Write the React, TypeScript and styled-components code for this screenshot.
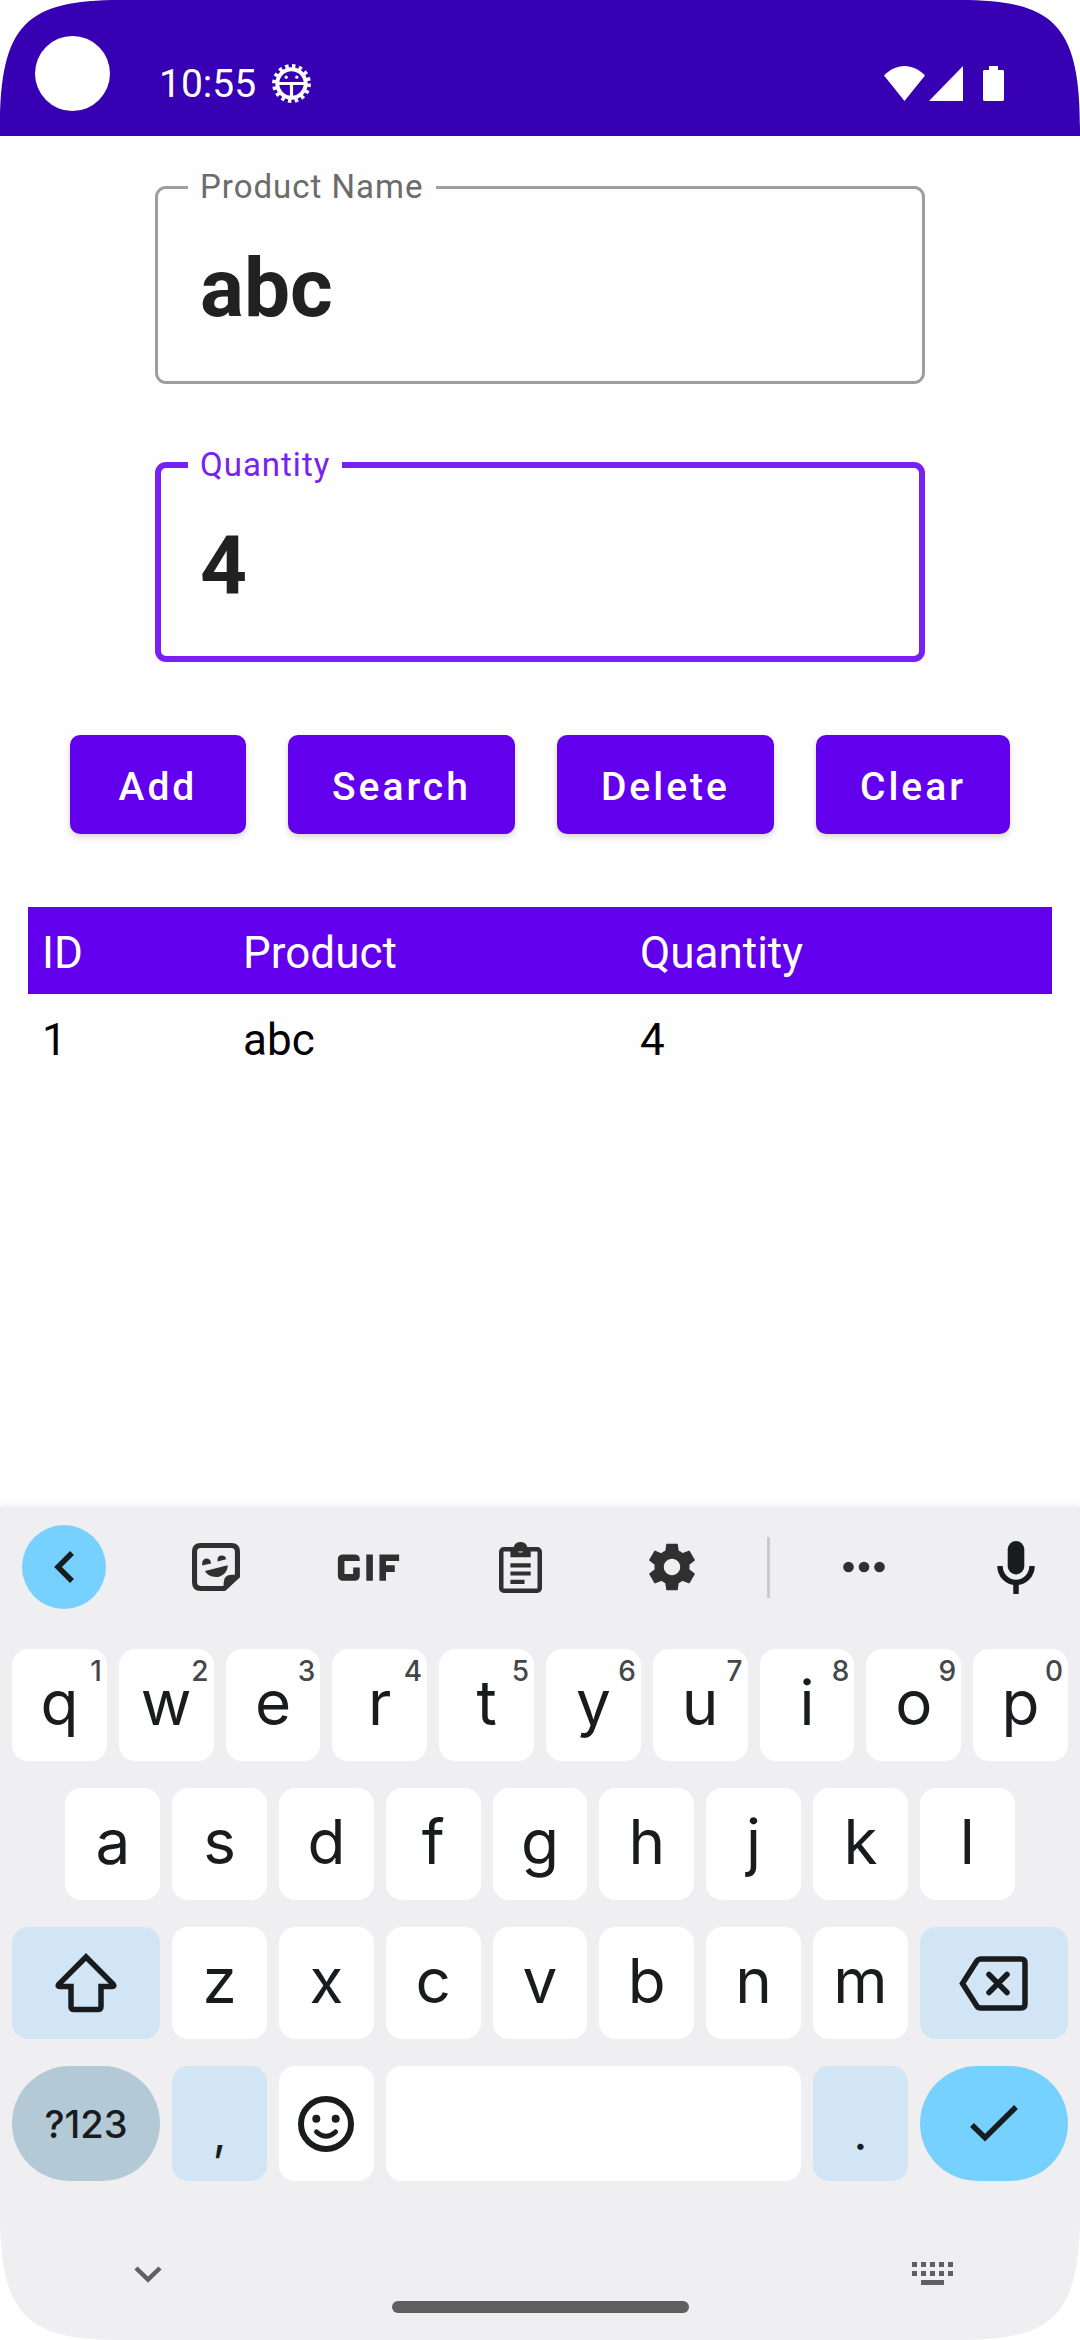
import React from "react";
import styled, { createGlobalStyle, css } from "styled-components";
import { MdGif } from "react-icons/md";

const GlobalStyle = createGlobalStyle`
  *, *::before, *::after { box-sizing: border-box; }
  body {
    margin: 0;
    background: #fefefe;
    font-family: Roboto, "Liberation Sans", sans-serif;
  }
  button, input { font-family: inherit; }
  button { border: 0; padding: 0; cursor: pointer; }
  svg { display: block; flex-shrink: 0; }
`;

const Screen = styled.div`
  position: relative;
  display: flex;
  flex-direction: column;
  min-height: 100vh;
  overflow: hidden;
`;

/* ---------- display cut-outs ---------- */

const Corner = styled.svg<{ $v: "top" | "bottom"; $h: "left" | "right" }>`
  position: absolute;
  ${(p) => p.$v}: 0;
  ${(p) => p.$h}: 0;
  z-index: 2;
  transform: scale(${(p) => (p.$h === "right" ? -1 : 1)}, ${(p) => (p.$v === "bottom" ? -1 : 1)});
`;

const Camera = styled.div`
  position: absolute;
  top: 36px;
  left: 35px;
  width: 75px;
  height: 75px;
  border-radius: 50%;
  background: #fff;
`;

/* ---------- status bar ---------- */

const StatusBar = styled.header`
  display: flex;
  align-items: center;
  justify-content: space-between;
  height: 136px;
  padding: 30px 76px 0 159px;
  background: #3700b3;
  color: #fff;
`;

const StatusGroup = styled.div<{ $gap: number }>`
  display: flex;
  align-items: center;
  gap: ${(p) => p.$gap}px;
`;

const Clock = styled.span`
  padding-top: 2px;
  font-size: 39px;
  line-height: 48px;
`;

/* ---------- form ---------- */

const Main = styled.main`
  display: flex;
  flex-direction: column;
  gap: 73px;
  padding: 33px 28px 72px;
`;

const Fields = styled.form`
  display: flex;
  flex-direction: column;
  gap: 63px;
  padding: 0 127px;
`;

const Outline = styled.fieldset<{ $focused?: boolean }>`
  --line: ${(p) => (p.$focused ? 6 : 3)}px;
  min-width: 0;
  margin: 0;
  padding: 0 calc(33px - var(--line)) calc(13px - var(--line));
  border: var(--line) solid ${(p) => (p.$focused ? "#7722f2" : "#9e9e9e")};
  border-radius: 11px;
  color: ${(p) => (p.$focused ? "#7722f2" : "#6b6b6b")};
`;

const Legend = styled.legend`
  padding: 0 12px;
  font-size: 33px;
  line-height: 36px;
  letter-spacing: 1px;
`;

const TextInput = styled.input`
  display: block;
  width: 100%;
  height: 166px;
  padding: 0 12px;
  border: 0;
  outline: 0;
  background: transparent;
  color: #212121;
  font-size: 82px;
  font-weight: 700;
`;

const Actions = styled.div`
  display: flex;
  justify-content: center;
  gap: 42px;
`;

const ActionButton = styled.button`
  min-width: 176px;
  height: 99px;
  padding: 4px 44px 0;
  border-radius: 10px;
  background: #6200ee;
  box-shadow: 0 3px 6px rgba(0, 0, 0, 0.16);
  color: #fff;
  font-size: 39px;
  font-weight: 500;
  letter-spacing: 3px;
`;

/* ---------- table ---------- */

const Table = styled.table`
  width: 100%;
  border-collapse: collapse;
  table-layout: fixed;
  color: #000;
  font-size: 44px;
  line-height: 52px;

  thead {
    background: #6200ee;
    color: #fff;
  }
`;

const cell = css`
  height: 87px;
  padding: 4px 14px 0;
  text-align: left;
  font-weight: 400;
  vertical-align: middle;
`;

const HeadCell = styled.th<{ $width?: number }>`
  ${cell}
  width: ${(p) => (p.$width ? `${p.$width}px` : "auto")};
`;

const Cell = styled.td`
  ${cell}
`;

/* ---------- keyboard ---------- */

const Keyboard = styled.section`
  margin-top: auto;
  padding-top: 18px;
  background: #efeff1;
  box-shadow: 0 -2px 6px rgba(0, 0, 0, 0.06);
  color: #191c1e;
  font-family: Inter, Roboto, sans-serif;
`;

const Toolbar = styled.div`
  display: flex;
  align-items: center;
  justify-content: space-between;
  padding: 0 22px;
`;

const ToolGroup = styled.div`
  display: flex;
  gap: 68px;
`;

const ToolButton = styled.button<{ $accent?: boolean }>`
  display: flex;
  align-items: center;
  justify-content: center;
  width: 84px;
  height: 84px;
  border-radius: 50%;
  background: ${(p) => (p.$accent ? "#77d1ff" : "transparent")};
  color: ${(p) => (p.$accent ? "#191c1e" : "#303030")};
`;

const ToolDivider = styled.div`
  width: 3px;
  height: 61px;
  background: #cacacc;
`;

const Keys = styled.div`
  display: grid;
  gap: 27px;
  padding: 40px 12px 69px;
`;

const KeyRow = styled.div<{ $inset?: boolean }>`
  display: grid;
  grid-template-columns: repeat(20, minmax(0, 1fr));
  column-gap: 12px;

  ${(p) => p.$inset && "& > :first-child { grid-column-start: 2; }"}
`;

type Tone = "plain" | "soft" | "muted" | "accent";

const toneColor: Record<Tone, string> = {
  plain: "#ffffff",
  soft: "#d2e5f4",
  muted: "#b4c9d6",
  accent: "#77d1ff",
};

const Key = styled.button<{ $span?: number; $tone?: Tone; $tall?: boolean }>`
  position: relative;
  display: flex;
  align-items: center;
  justify-content: center;
  grid-column-end: span ${(p) => p.$span ?? 2};
  height: ${(p) => (p.$tall ? 115 : 112)}px;
  border-radius: ${(p) => (p.$tone === "muted" || p.$tone === "accent" ? 58 : 16)}px;
  background: ${(p) => toneColor[p.$tone ?? "plain"]};
  color: inherit;
`;

const Letter = styled.span`
  padding-bottom: 4px;
  font-size: 62px;
  line-height: 72px;
`;

const Punctuation = styled.span`
  padding-top: 18px;
  font-size: 48px;
  line-height: 58px;
`;

const ModeLabel = styled.span`
  font-size: 38px;
  font-weight: 500;
  line-height: 46px;
`;

const Hint = styled.span`
  position: absolute;
  top: 8px;
  right: 5px;
  color: #444749;
  font-size: 28px;
  font-weight: 500;
  line-height: 28px;
`;

const NavRow = styled.div`
  display: flex;
  justify-content: space-between;
  padding: 0 123px 0 124px;
`;

const NavButton = styled.button`
  display: flex;
  align-items: center;
  justify-content: center;
  width: 48px;
  height: 48px;
  background: transparent;
  color: #606062;
`;

const HomeBar = styled.div`
  width: 297px;
  height: 12px;
  margin: 3px auto 27px;
  border-radius: 6px;
  background: #5f5f5f;
`;

/* ---------- icons ---------- */

const BugIcon = () => (
  <svg width="39" height="39" viewBox="-19.5 -19.5 39 39" fill="none" stroke="#fff">
    <circle r="14.2" strokeWidth="4" />
    <circle r="17.4" strokeWidth="4" strokeDasharray="3.4 3.433" />
    <path d="M-13 0H13M0 0V14" strokeWidth="3.2" />
    <circle cx="-5.3" cy="-6.3" r="1.6" fill="#fff" stroke="none" />
    <circle cx="5.3" cy="-6.3" r="1.6" fill="#fff" stroke="none" />
  </svg>
);

const WifiIcon = () => (
  <svg width="41" height="35" viewBox="0 0 41 35" fill="#fff">
    <path d="M20.5 35L0 9.500C6 3.500 13 0 20.500 0S35 3.500 41 9.500Z" />
  </svg>
);

const SignalIcon = () => (
  <svg width="34" height="35" viewBox="0 0 34 35" fill="#fff">
    <path d="M34 0V35H0Z" />
  </svg>
);

const BatteryIcon = () => (
  <svg width="21" height="35" viewBox="0 0 21 35" fill="#fff">
    <path d="M6 0H15V4H20L21 5V34L20 35H1L0 34V5L1 4H6Z" />
  </svg>
);

const BackIcon = () => (
  <svg width="22" height="34" viewBox="0 0 22 34" fill="none" stroke="currentColor" strokeWidth="5.500">
    <path d="M19 3L5 17L19 31" />
  </svg>
);

const StickerIcon = () => (
  <svg width="48" height="48" viewBox="0 0 47 47" fill="currentColor">
    <path
      d="M44.500 32.500V8.500Q44.500 2.500 38.500 2.500H8.500Q2.500 2.500 2.500 8.500V38.500Q2.500 44.500 8.500 44.500H31.500Z"
      fill="none"
      stroke="currentColor"
      strokeWidth="5"
    />
    <path d="M31 45V39Q31 31 39 31H46V33L33 46Z" />
    <path d="M10 22V19.500A4.300 4.300 0 0 1 18.600 19.500V20Z" />
    <path d="M25 18V15.500A4.300 4.300 0 0 1 33.400 15.500V16Z" />
    <path d="M12.700 27.500L35 21.700C35 29 29 33.300 23.500 33.300C19 33.300 15 31.500 12.700 27.500Z" />
  </svg>
);

const ClipboardIcon = () => (
  <svg width="43" height="51" viewBox="0 0 43 51" fill="currentColor">
    <rect x="2.250" y="7.300" width="38.500" height="41.400" rx="2.500" fill="none" stroke="currentColor" strokeWidth="4.500" />
    <path
      fillRule="evenodd"
      d="M11.400 5.500H14.500A7.200 7.200 0 0 1 28.500 5.500H31.700V15.300H11.400ZM21.500 5.200A2.700 2.700 0 1 0 21.500 10.600A2.700 2.700 0 1 0 21.500 5.200Z"
    />
    <path d="M11.400 21.300H31.700V25.500H11.400ZM11.400 29.400H31.700V33.600H11.400ZM11.400 37.800H25.500V42H11.400Z" />
  </svg>
);

const GearIcon = () => (
  <svg width="56" height="56" viewBox="0 0 24 24" fill="currentColor">
    <path d="M19.44 12.99l-.01.02c.04-.33.08-.67.08-1.010 0-.34-.03-.66-.07-.99l.01.02 2.440-1.920-2.430-4.220-2.870 1.160.01.01c-.52-.4-1.090-.74-1.710-1h.01L14.440 2H9.570l-.44 3.070h.01c-.62.26-1.190.6-1.710 1l.01-.01-2.880-1.170-2.440 4.220 2.440 1.920.01-.02c-.04.33-.07.65-.07.99 0 .34.03.68.08 1.010l-.01-.02-2.100 1.650-.33.26 2.430 4.200 2.880-1.150-.02-.04c.53.41 1.100.75 1.730 1.010h-.03L9.580 22h4.850s.03-.18.06-.42l.38-2.650h-.01c.62-.26 1.200-.6 1.730-1.010l-.02.04 2.880 1.150 2.430-4.200s-.14-.12-.33-.26l-2.110-1.660zM12 15.500c-1.930 0-3.500-1.570-3.500-3.500s1.570-3.500 3.500-3.500 3.500 1.570 3.500 3.500-1.570 3.500-3.500 3.500z" />
  </svg>
);

const MoreIcon = () => (
  <svg width="42" height="12" viewBox="0 0 42 12" fill="currentColor">
    <circle cx="5.500" cy="6" r="5.300" />
    <circle cx="21" cy="6" r="5.300" />
    <circle cx="36.500" cy="6" r="5.300" />
  </svg>
);

const MicIcon = () => (
  <svg width="38" height="53" viewBox="0 0 38 53" fill="none" stroke="#191c1e" strokeWidth="5.500">
    <rect x="10.700" y="0" width="16.600" height="33.500" rx="8.300" fill="#191c1e" stroke="none" />
    <path d="M3 25A16 16.500 0 0 0 35 25M19 42V53" />
  </svg>
);

const ShiftIcon = () => (
  <svg width="62" height="60" viewBox="0 0 62 60" fill="none" stroke="currentColor" strokeWidth="5.500">
    <path d="M31 4L4 31Q2 33.500 5 33.500H16V53.500Q16 56.500 19 56.500H43Q46 56.500 46 53.500V33.500H57Q60 33.500 58 31Z" />
  </svg>
);

const BackspaceIcon = () => (
  <svg width="69" height="55" viewBox="0 0 69 55" fill="none" stroke="currentColor" strokeWidth="5.500">
    <path d="M3.500 27.500L17.500 5.500Q19 3 22 3H62Q66 3 66 7V48Q66 52 62 52H22Q19 52 17.500 49.500Z" />
    <path d="M30 18.500L48 36.500M48 18.500L30 36.500" strokeLinecap="round" />
  </svg>
);

const SmileIcon = () => (
  <svg width="56" height="56" viewBox="-28 -28 56 56" fill="none" stroke="currentColor">
    <circle r="25" strokeWidth="6" />
    <path d="M-9.500 8Q0 16.500 9.500 8" strokeWidth="5" strokeLinecap="round" />
    <circle cx="-9.700" cy="-5.300" r="4" fill="currentColor" stroke="none" />
    <circle cx="9.700" cy="-5.300" r="4" fill="currentColor" stroke="none" />
  </svg>
);

const CheckIcon = () => (
  <svg width="48" height="37" viewBox="0 0 48 37" fill="none" stroke="currentColor" strokeWidth="5.500">
    <path d="M2 20L15 32.700L46 2" />
  </svg>
);

const CollapseIcon = () => (
  <svg width="28" height="17" viewBox="0 0 28 17" fill="none" stroke="currentColor" strokeWidth="4.500">
    <path d="M2 2L14 13.700L26 2" />
  </svg>
);

const KeyboardIcon = () => (
  <svg width="42" height="24" viewBox="0 0 42 24" fill="currentColor">
    {[0, 9, 18, 27, 36].map((x) => (
      <React.Fragment key={x}>
        <rect x={x} y="0" width="5" height="5" />
        <rect x={x} y="9" width="5" height="5" />
      </React.Fragment>
    ))}
    <rect x="9" y="18" width="23" height="5" />
  </svg>
);

const CornerMask = ({ v, h }: { v: "top" | "bottom"; h: "left" | "right" }) => (
  <Corner $v={v} $h={h} width="128" height="128" viewBox="0 0 128 128" fill="#fff" aria-hidden="true">
    <path d="M0 0H120C27 0 0 24 0 128Z" />
  </Corner>
);

/* ---------- data ---------- */

const fields = [
  { id: "product-name", label: "Product Name", value: "abc", focused: false },
  { id: "quantity", label: "Quantity", value: "4", focused: true },
];
const actions = ["Add", "Search", "Delete", "Clear"];
const products = [{ id: 1, product: "abc", quantity: 4 }];
const topRow = [..."qwertyuiop"];
const hints = [..."1234567890"];

const LetterKeys = ({ letters }: { letters: string }) => (
  <>
    {[...letters].map((letter) => (
      <Key type="button" key={letter}>
        <Letter>{letter}</Letter>
      </Key>
    ))}
  </>
);

export default function App() {
  return (
    <Screen>
      <GlobalStyle />
      <CornerMask v="top" h="left" />
      <CornerMask v="top" h="right" />
      <CornerMask v="bottom" h="left" />
      <CornerMask v="bottom" h="right" />
      <Camera />

      <StatusBar>
        <StatusGroup $gap={16}>
          <Clock>10:55</Clock>
          <BugIcon />
        </StatusGroup>
        <StatusGroup $gap={20}>
          <StatusGroup $gap={4}>
            <WifiIcon />
            <SignalIcon />
          </StatusGroup>
          <BatteryIcon />
        </StatusGroup>
      </StatusBar>

      <Main>
        <Fields id="product-form" onSubmit={(e) => e.preventDefault()}>
          {fields.map((f) => (
            <Outline key={f.id} $focused={f.focused}>
              <Legend>
                <label htmlFor={f.id}>{f.label}</label>
              </Legend>
              <TextInput id={f.id} type="text" defaultValue={f.value} />
            </Outline>
          ))}
        </Fields>

        <Actions>
          {actions.map((name) => (
            <ActionButton type="button" key={name}>
              {name}
            </ActionButton>
          ))}
        </Actions>

        <Table>
          <thead>
            <tr>
              <HeadCell scope="col" $width={201}>ID</HeadCell>
              <HeadCell scope="col" $width={397}>Product</HeadCell>
              <HeadCell scope="col">Quantity</HeadCell>
            </tr>
          </thead>
          <tbody>
            {products.map((p) => (
              <tr key={p.id}>
                <Cell>{p.id}</Cell>
                <Cell>{p.product}</Cell>
                <Cell>{p.quantity}</Cell>
              </tr>
            ))}
          </tbody>
        </Table>
      </Main>

      <Keyboard aria-label="Keyboard">
        <Toolbar>
          <ToolGroup>
            <ToolButton type="button" $accent aria-label="Back"><BackIcon /></ToolButton>
            <ToolButton type="button" aria-label="Stickers"><StickerIcon /></ToolButton>
            <ToolButton type="button" aria-label="GIF"><MdGif size={105} /></ToolButton>
            <ToolButton type="button" aria-label="Clipboard"><ClipboardIcon /></ToolButton>
            <ToolButton type="button" aria-label="Settings"><GearIcon /></ToolButton>
          </ToolGroup>
          <ToolDivider />
          <ToolGroup>
            <ToolButton type="button" aria-label="More"><MoreIcon /></ToolButton>
            <ToolButton type="button" aria-label="Voice input"><MicIcon /></ToolButton>
          </ToolGroup>
        </Toolbar>

        <Keys>
          <KeyRow>
            {topRow.map((letter, i) => (
              <Key type="button" key={letter}>
                <Letter>{letter}</Letter>
                <Hint>{hints[i]}</Hint>
              </Key>
            ))}
          </KeyRow>
          <KeyRow $inset>
            <LetterKeys letters="asdfghjkl" />
          </KeyRow>
          <KeyRow>
            <Key type="button" $span={3} $tone="soft" aria-label="Shift"><ShiftIcon /></Key>
            <LetterKeys letters="zxcvbnm" />
            <Key type="button" $span={3} $tone="soft" aria-label="Backspace"><BackspaceIcon /></Key>
          </KeyRow>
          <KeyRow>
            <Key type="button" $span={3} $tone="muted" $tall><ModeLabel>?123</ModeLabel></Key>
            <Key type="button" $tone="soft" $tall><Punctuation>,</Punctuation></Key>
            <Key type="button" $tall aria-label="Emoji"><SmileIcon /></Key>
            <Key type="button" $span={8} $tall aria-label="Space" />
            <Key type="button" $tone="soft" $tall><Punctuation>.</Punctuation></Key>
            <Key type="button" $span={3} $tone="accent" $tall aria-label="Done"><CheckIcon /></Key>
          </KeyRow>
        </Keys>

        <NavRow>
          <NavButton type="button" aria-label="Hide keyboard"><CollapseIcon /></NavButton>
          <NavButton type="button" aria-label="Switch keyboard"><KeyboardIcon /></NavButton>
        </NavRow>
        <HomeBar />
      </Keyboard>
    </Screen>
  );
}
